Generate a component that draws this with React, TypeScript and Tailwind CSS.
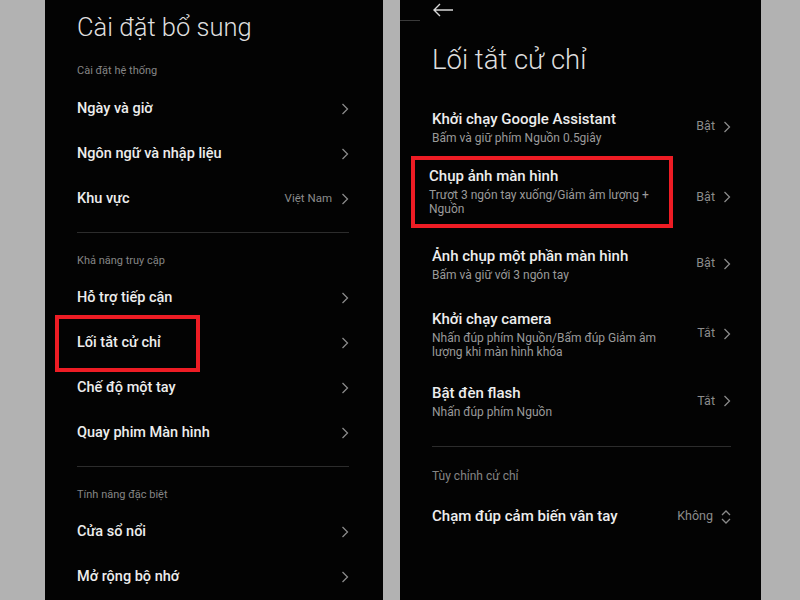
import React from "react"

type Row = { title: string; value?: string }
type GestureRow = { title: string; lines: string[]; value: string }

const font = { fontFamily: "Roboto, 'Noto Sans', sans-serif" }

function Chevron() {
  return (
    <svg width="8" height="12" viewBox="0 0 8 12" className="shrink-0">
      <path d="M1.5 1 L6.5 6 L1.5 11" fill="none" stroke="#8a8a8a" strokeWidth="1.3" />
    </svg>
  )
}

function UpDown() {
  return (
    <svg width="10" height="16" viewBox="0 0 10 16" className="shrink-0">
      <path d="M1 6 L5 2 L9 6" fill="none" stroke="#8a8a8a" strokeWidth="1.3" />
      <path d="M1 10 L5 14 L9 10" fill="none" stroke="#8a8a8a" strokeWidth="1.3" />
    </svg>
  )
}

const system: Row[] = [
  { title: "Ngày và giờ" },
  { title: "Ngôn ngữ và nhập liệu" },
  { title: "Khu vực", value: "Việt Nam" },
]

const access: Row[] = [
  { title: "Hỗ trợ tiếp cận" },
  { title: "Lối tắt cử chỉ" },
  { title: "Chế độ một tay" },
  { title: "Quay phim Màn hình" },
]

const special: Row[] = [{ title: "Cửa sổ nổi" }, { title: "Mở rộng bộ nhớ" }]

const gestures: GestureRow[] = [
  { title: "Khởi chạy Google Assistant", lines: ["Bấm và giữ phím Nguồn 0.5giây"], value: "Bật" },
  { title: "Chụp ảnh màn hình", lines: ["Trượt 3 ngón tay xuống/Giảm âm lượng +", "Nguồn"], value: "Bật" },
  { title: "Ảnh chụp một phần màn hình", lines: ["Bấm và giữ với 3 ngón tay"], value: "Bật" },
  { title: "Khởi chạy camera", lines: ["Nhấn đúp phím Nguồn/Bấm đúp Giảm âm", "lượng khi màn hình khóa"], value: "Tắt" },
  { title: "Bật đèn flash", lines: ["Nhấn đúp phím Nguồn"], value: "Tắt" },
]

function SettingRow({ row, boxed }: { row: Row; boxed?: boolean }) {
  return (
    <div className="relative flex items-center justify-between h-[45px]">
      <span className="text-[14.5px] font-medium text-[#ededed]">{row.title}</span>
      <div className="flex items-center gap-[9px]">
        {row.value && <span className="text-[11.5px] text-[#8c8c8c]">{row.value}</span>}
        <Chevron />
      </div>
      {boxed && (
        <div className="absolute left-[-22px] top-[-5px] w-[145px] h-[57px] border-[4px] border-[#ee1c24]" />
      )}
    </div>
  )
}

function SectionHeader({ label }: { label: string }) {
  return (
    <div className="h-[42px] pt-[20px] text-[11px] leading-[16px] text-[#858585]">{label}</div>
  )
}

function LeftPanel() {
  return (
    <div className="w-[338px] h-full bg-[#030303] pl-[32px] pr-[34px] pt-[10px] flex flex-col">
      <h1 className="text-[25.5px] font-light leading-[34px] text-[#dedede]">Cài đặt bổ sung</h1>
      <div className="mt-[12px] h-[30px] flex items-center pt-[1px] text-[11px] text-[#858585]">Cài đặt hệ thống</div>
      {system.map((r) => (
        <SettingRow key={r.title} row={r} />
      ))}
      <div className="mt-[11px] h-px bg-[#2c2c2c]" />
      <SectionHeader label="Khả năng truy cập" />
      {access.map((r) => (
        <SettingRow key={r.title} row={r} boxed={r.title === "Lối tắt cử chỉ"} />
      ))}
      <div className="mt-[11px] h-px bg-[#2c2c2c]" />
      <SectionHeader label="Tính năng đặc biệt" />
      {special.map((r) => (
        <SettingRow key={r.title} row={r} />
      ))}
    </div>
  )
}

function RightPanel() {
  return (
    <div className="relative w-[361px] h-full bg-[#030303] pl-[32px] pr-[30px] flex flex-col">
      {/* leftover bar from the status area */}
      <div className="absolute left-0 top-[20px] w-[20px] h-px bg-[#3a3a3a]" />
      <div className="h-[20px] flex items-center">
        <svg width="22" height="14" viewBox="0 0 22 14">
          <path d="M21 7 H2 M8 1 L2 7 L8 13" fill="none" stroke="#d8d8d8" strokeWidth="1.4" />
        </svg>
      </div>
      <h1 className="mt-[23px] text-[27.5px] font-light leading-[34px] text-[#dedede]">Lối tắt cử chỉ</h1>
      <div className="mt-[18px] flex flex-col">
        {gestures.map((g, i) => {
          const boxed = i === 1
          const pad = boxed ? "pt-[8px] pb-[16px]" : i === 3 ? "pt-[13.5px] pb-[11px]" : "py-[13.5px]"
          return (
            <div key={g.title} className={`relative flex items-center justify-between ${pad}`}>
              <div className={`flex flex-col ${boxed ? "ml-[-3px]" : ""}`}>
                <span className="text-[15px] font-medium leading-[20px] text-[#ededed]">{g.title}</span>
                <div className="mt-[2px] flex flex-col">
                  {g.lines.map((l) => (
                    <span key={l} className="text-[12px] leading-[14px] text-[#9a9a9a]">
                      {l}
                    </span>
                  ))}
                </div>
              </div>
              <div className={`flex items-center gap-[8px] ${boxed ? "mt-[12px]" : ""}`}>
                <span className="text-[12.5px] text-[#8c8c8c]">{g.value}</span>
                <Chevron />
              </div>
              {boxed && (
                <div className="absolute left-[-21px] top-[-2px] w-[262px] h-[72px] border-[4px] border-[#ee1c24]" />
              )}
            </div>
          )
        })}
      </div>
      <div className="mt-[13px] h-px bg-[#2c2c2c]" />
      <div className="pt-[21px] text-[12px] leading-[16px] text-[#858585]">Tùy chỉnh cử chỉ</div>
      <div className="mt-[13px] h-[40px] flex items-center justify-between">
        <span className="text-[15px] font-medium text-[#ededed]">Chạm đúp cảm biến vân tay</span>
        <div className="flex items-center gap-[8px]">
          <span className="text-[12.5px] text-[#8c8c8c]">Không</span>
          <UpDown />
        </div>
      </div>
    </div>
  )
}

export default function App() {
  return (
    <div className="w-[800px] h-[600px] bg-[#b2b2b2] flex overflow-hidden" style={font}>
      <div className="w-[45px]" />
      <LeftPanel />
      <div className="w-[17px]" />
      <RightPanel />
    </div>
  )
}
